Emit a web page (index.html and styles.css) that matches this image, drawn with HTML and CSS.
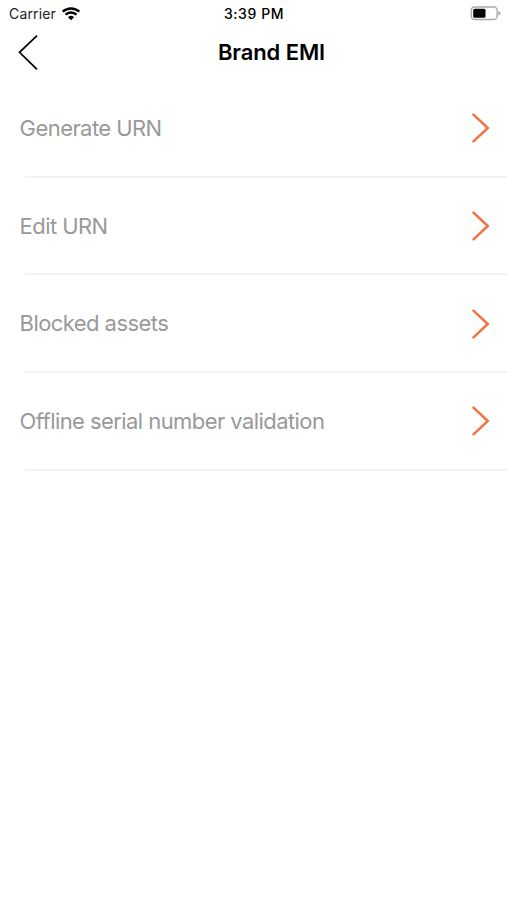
FILE: index.html
```html
<!DOCTYPE html>
<html lang="en">
<head>
<meta charset="utf-8">
<title>Brand EMI</title>
<link rel="stylesheet" href="styles.css">
</head>
<body>
<header class="status">
  <div class="carrier"><span class="carrier-name">Carrier</span>
    <svg class="wifi" width="20" height="14" viewBox="0 0 20 14"><path d="M10 13.2 7 10.2a4.3 4.3 0 0 1 6 0z"/><path class="arc" d="M4.5 7.7a7.9 7.9 0 0 1 11 0M1.7 4.7a12.3 12.3 0 0 1 16.6 0"/></svg>
  </div>
  <time class="time">3:39 PM</time>
  <svg class="battery" width="32" height="16" viewBox="0 0 32 16"><rect class="shell" x="1.2" y="1" width="26" height="12.5" rx="3.5"/><rect x="3.2" y="2.8" width="12.3" height="9" rx="1.5"/><path class="tip" d="M28.3 5q2.2.7 2.2 2.3t-2.2 2.3z"/></svg>
</header>
<nav class="navbar">
  <svg class="back" width="22" height="36" viewBox="0 0 22 36"><path d="M20 .7 2.5 17.3 20 34.3"/></svg>
  <h1 class="title">Brand EMI</h1>
</nav>
<main class="menu">
  <div class="row"><span class="label">Generate URN</span><svg class="chevron" width="20" height="30" viewBox="0 0 20 30"><path d="M2.5 1.7 16.8 15 2.5 28.3"/></svg></div>
  <div class="row"><span class="label">Edit URN</span><svg class="chevron" width="20" height="30" viewBox="0 0 20 30"><path d="M2.5 1.7 16.8 15 2.5 28.3"/></svg></div>
  <div class="row"><span class="label">Blocked assets</span><svg class="chevron" width="20" height="30" viewBox="0 0 20 30"><path d="M2.5 1.7 16.8 15 2.5 28.3"/></svg></div>
  <div class="row"><span class="label">Offline serial number validation</span><svg class="chevron" width="20" height="30" viewBox="0 0 20 30"><path d="M2.5 1.7 16.8 15 2.5 28.3"/></svg></div>
</main>
</body>
</html>
```
FILE: styles.css
```css
* { box-sizing: border-box; }
body { margin: 0; min-height: 900px; background: #fff; font-family: Inter, "Liberation Sans", sans-serif; color: #000; }
.status { display: grid; grid-template-columns: 1fr auto 1fr; align-items: center; height: 27px; padding: 0 5px 0 9px; font-size: 14px; }
.carrier { display: flex; align-items: center; gap: 5px; color: #222; letter-spacing: 0.15px; }
.time { font-weight: 500; letter-spacing: 0.58px; margin-right: 3px; }
.wifi { fill: #000; }
.battery { justify-self: end; }
.arc, .shell, .back, .chevron { fill: none; }
.arc { stroke: #000; stroke-width: 2.4; }
.shell { stroke: #aaa; stroke-width: 1.4; }
.tip { fill: #aaa; }
.navbar { display: grid; grid-template-columns: 1fr auto 1fr; align-items: center; height: 52px; padding-left: 36px; }
.back { margin-left: -19px; stroke: #000; stroke-width: 1.7; }
.title { margin: 0 0 2px; font-size: 22px; font-weight: 600; line-height: 28px; letter-spacing: -0.1px; }
.menu { padding-top: 1px; }
.row { display: flex; align-items: center; justify-content: space-between; height: 97.7px; padding: 0 16px 0 20px; background: linear-gradient(#f2f2f2, #f2f2f2) 25px 100% / 100% 2px no-repeat; }
.label { margin: -2px 0 0 -0.4px; color: #999; font-size: 22px; line-height: 28px; letter-spacing: -0.57px; }
.chevron { margin-top: -1.3px; stroke: #f37241; stroke-width: 2.5; stroke-linecap: round; }
```
